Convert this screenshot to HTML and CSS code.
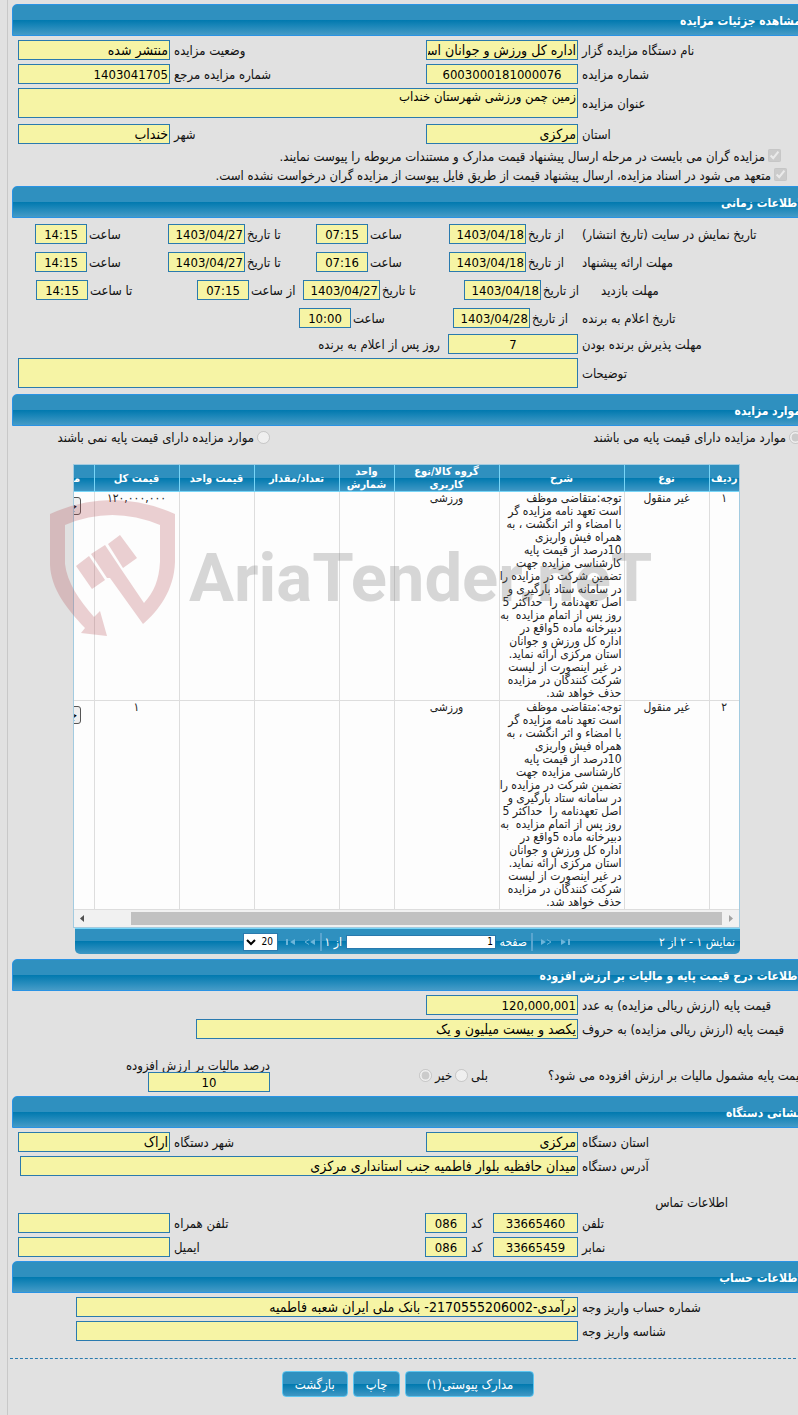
FILE: index.html
```html
<!DOCTYPE html>
<html lang="fa">
<head>
<meta charset="utf-8">
<title>مشاهده جزئیات مزایده</title>
<link rel="stylesheet" href="styles.css">
</head>
<body>
<main class="page" dir="rtl">
  <h2 class="bar">مشاهده جزئیات مزایده</h2>
  <section class="panel">
    <div class="row pair">
      <label for="org">نام دستگاه مزایده گزار</label><input id="org" value="اداره کل ورزش و جوانان استان مرکزی" readonly>
      <label for="state">وضعیت مزایده</label><input id="state" value="منتشر شده" readonly>
    </div>
    <div class="row pair">
      <label for="num">شماره مزایده</label><input id="num" class="mid" value="6003000181000076" readonly>
      <label for="ref">شماره مزایده مرجع</label><input id="ref" class="digits" value="1403041705" readonly>
    </div>
    <div class="row single">
      <label for="subject">عنوان مزایده</label><textarea id="subject" readonly>زمین چمن ورزشی شهرستان خنداب</textarea>
    </div>
    <div class="row pair spaced">
      <label for="prov">استان</label><input id="prov" value="مرکزی" readonly>
      <label for="city">شهر</label><input id="city" value="خنداب" readonly>
    </div>
    <div class="tick inset"><input type="checkbox" id="t1" checked disabled><label for="t1">مزایده گران می بایست در مرحله ارسال پیشنهاد قیمت مدارک و مستندات مربوطه را پیوست نمایند.</label></div>
    <div class="tick"><input type="checkbox" id="t2" checked disabled><label for="t2">متعهد می شود در اسناد مزایده، ارسال پیشنهاد قیمت از طریق فایل پیوست از مزایده گران درخواست نشده است.</label></div>
  </section>

  <h2 class="bar">اطلاعات زمانی</h2>
  <section class="panel times">
    <div class="row span">
      <span class="lead">تاریخ نمایش در سایت (تاریخ انتشار)</span>
      <div class="field"><label for="a1">از تاریخ</label><input id="a1" class="date" value="1403/04/18" readonly></div>
      <div class="field"><label for="a2">ساعت</label><input id="a2" class="time" value="07:15" readonly></div>
      <div class="field"><label for="a3">تا تاریخ</label><input id="a3" class="date" value="1403/04/27" readonly></div>
      <div class="field"><label for="a4">ساعت</label><input id="a4" class="time" value="14:15" readonly></div>
    </div>
    <div class="row span">
      <span class="lead">مهلت ارائه پیشنهاد</span>
      <div class="field"><label for="b1">از تاریخ</label><input id="b1" class="date" value="1403/04/18" readonly></div>
      <div class="field"><label for="b2">ساعت</label><input id="b2" class="time" value="07:16" readonly></div>
      <div class="field"><label for="b3">تا تاریخ</label><input id="b3" class="date" value="1403/04/27" readonly></div>
      <div class="field"><label for="b4">ساعت</label><input id="b4" class="time" value="14:15" readonly></div>
    </div>
    <div class="row span visit">
      <span class="lead">مهلت بازدید</span>
      <div class="field"><label for="c1">از تاریخ</label><input id="c1" class="date" value="1403/04/18" readonly></div>
      <div class="field"><label for="c2">تا تاریخ</label><input id="c2" class="date" value="1403/04/27" readonly></div>
      <div class="field"><label for="c3">از ساعت</label><input id="c3" class="time" value="07:15" readonly></div>
      <div class="field"><label for="c4">تا ساعت</label><input id="c4" class="time" value="14:15" readonly></div>
    </div>
    <div class="row span winner">
      <span class="lead">تاریخ اعلام به برنده</span>
      <div class="field"><label for="d1">از تاریخ</label><input id="d1" class="date" value="1403/04/28" readonly></div>
      <div class="field"><label for="d2">ساعت</label><input id="d2" class="time" value="10:00" readonly></div>
    </div>
    <div class="row accept">
      <label for="days">مهلت پذیرش برنده بودن</label><input id="days" class="mid" value="7" readonly>
      <span class="after">روز پس از اعلام به برنده</span>
    </div>
    <div class="row single">
      <label for="notes">توضیحات</label><textarea id="notes" readonly></textarea>
    </div>
  </section>

  <h2 class="bar">موارد مزایده</h2>
  <section class="panel items">
    <div class="choices">
      <div class="choice"><input type="radio" name="base" id="r1" checked disabled><label for="r1">موارد مزایده دارای قیمت پایه می باشند</label></div>
      <div class="choice"><input type="radio" name="base" id="r2" disabled><label for="r2">موارد مزایده دارای قیمت پایه نمی باشند</label></div>
    </div>
    <div class="gridbox">
      <div class="viewport">
        <table>
          <colgroup><col class="c1"><col class="c2"><col class="c3"><col class="c4"><col class="c5"><col class="c6"><col class="c7"><col class="c8"><col class="c9"></colgroup>
          <thead><tr><th>ردیف</th><th>نوع</th><th>شرح</th><th>گروه کالا/نوع<br>کاربری</th><th>واحد<br>شمارش</th><th>تعداد/مقدار</th><th>قیمت واحد</th><th>قیمت کل</th><th>مشاهده</th></tr></thead>
          <tbody>
            <tr><td>۱</td><td>غیر منقول</td><td class="desc">توجه:متقاضی موظف<br>است تعهد نامه مزایده گر<br>با امضاء و اثر انگشت ، به<br>همراه فیش واریزی<br>10درصد از قیمت پایه<br>کارشناسی مزایده جهت<br>تضمین شرکت در مزایده را<br>در سامانه ستاد بارگیری و<br>اصل تعهدنامه را &nbsp;حداکثر 5<br>روز پس از اتمام مزایده &nbsp;به<br>دبیرخانه ماده 5واقع در<br>اداره کل ورزش و جوانان<br>استان مرکزی ارائه نماید.<br>در غیر اینصورت از لیست<br>شرکت کنندگان در مزایده<br>حذف خواهد شد.</td><td>ورزشی</td><td></td><td></td><td></td><td>۱۲۰,۰۰۰,۰۰۰</td><td><button type="button" class="more">جزئیات</button></td></tr>
            <tr><td>۲</td><td>غیر منقول</td><td class="desc">توجه:متقاضی موظف<br>است تعهد نامه مزایده گر<br>با امضاء و اثر انگشت ، به<br>همراه فیش واریزی<br>10درصد از قیمت پایه<br>کارشناسی مزایده جهت<br>تضمین شرکت در مزایده را<br>در سامانه ستاد بارگیری و<br>اصل تعهدنامه را &nbsp;حداکثر 5<br>روز پس از اتمام مزایده &nbsp;به<br>دبیرخانه ماده 5واقع در<br>اداره کل ورزش و جوانان<br>استان مرکزی ارائه نماید.<br>در غیر اینصورت از لیست<br>شرکت کنندگان در مزایده<br>حذف خواهد شد.</td><td>ورزشی</td><td></td><td></td><td></td><td>۱</td><td><button type="button" class="more">جزئیات</button></td></tr>
          </tbody>
        </table>
        <div class="scroll" dir="ltr">
          <svg width="17" height="17" viewBox="0 0 17 17"><path d="M10 5v7L6 8.500z" fill="#505050"/></svg>
          <div class="thumb"></div>
          <svg width="17" height="17" viewBox="0 0 17 17"><path d="M7 5v7l4-3.500z" fill="#a3a3a3"/></svg>
        </div>
      </div>
      <div class="pager">
        <span class="info">نمایش ۱ - ۲ از ۲</span>
        <button type="button" class="nav" aria-label="اولین"><svg width="12" height="8" viewBox="0 0 12 8"><path d="M2 1v6l5-3z"/><path d="M9 1h2v6H9z"/></svg></button>
        <button type="button" class="nav" aria-label="قبلی"><svg width="12" height="8" viewBox="0 0 12 8"><path d="M1 1v6l5-3z"/><path d="M7 1.500L11 4 7 6.500" class="line"/></svg></button>
        <i class="sep"></i>
        <label for="pg">صفحه</label><input id="pg" value="1"><span class="of">از ۱</span>
        <i class="sep"></i>
        <button type="button" class="nav" aria-label="بعدی"><svg width="12" height="8" viewBox="0 0 12 8"><path d="M11 1v6L6 4z"/><path d="M5 1.500L1 4l4 2.500" class="line"/></svg></button>
        <button type="button" class="nav" aria-label="آخرین"><svg width="12" height="8" viewBox="0 0 12 8"><path d="M10 1v6L5 4z"/><path d="M1 1h2v6H1z"/></svg></button>
        <select aria-label="تعداد در صفحه"><option>20</option></select>
      </div>
      <div class="mark" dir="ltr" aria-hidden="true">
        <svg width="125" height="138" viewBox="0 0 125 138" fill="#b54a50"><path d="M0 15Q62-13 125 15V63C124 92 108 112 93 125L60 79H57L41 55 55 46 71 70 94 104C104 93 109 81 110 63V26Q62 6 15 26V65C17 83 29 101 44 118L50 112 57 137 31 134 35 129C17 110 1 90 0 66z"/><path d="M58 45L70 36 87 59 73 69zM26 67L39 57 55 81 42 90z"/></svg>
        <span>AriaTender.neT</span>
      </div>
    </div>
  </section>

  <h2 class="bar">اطلاعات درج قیمت پایه و مالیات بر ارزش افزوده</h2>
  <section class="panel">
    <div class="row pair"><label for="p1">قیمت پایه (ارزش ریالی مزایده) به عدد</label><input id="p1" class="digits" value="120,000,001" readonly></div>
    <div class="row words"><label for="p2">قیمت پایه (ارزش ریالی مزایده) به حروف</label><input id="p2" value="یکصد و بیست میلیون و یک" readonly></div>
    <div class="tax">
      <span class="ask">قیمت پایه مشمول مالیات بر ارزش افزوده می شود؟</span>
      <div class="yesno"><label for="y">بلی</label><input type="radio" name="tax" id="y" disabled><label for="n">خیر</label><input type="radio" name="tax" id="n" checked disabled></div>
      <div class="rate"><label for="rate">درصد مالیات بر ارزش افزوده</label><input id="rate" class="mid" value="10" readonly></div>
    </div>
  </section>

  <h2 class="bar">نشانی دستگاه</h2>
  <section class="panel">
    <div class="row pair">
      <label for="op">استان دستگاه</label><input id="op" value="مرکزی" readonly>
      <label for="oc">شهر دستگاه</label><input id="oc" value="اراک" readonly>
    </div>
    <div class="row address"><label for="oa">آدرس دستگاه</label><input id="oa" value="میدان حافظیه بلوار فاطمیه جنب استانداری مرکزی" readonly></div>
    <h3 class="sub">اطلاعات تماس</h3>
    <div class="row phone">
      <label for="ph">تلفن</label><input id="ph" class="mid" value="33665460" readonly>
      <label for="pc">کد</label><input id="pc" class="mid" value="086" readonly>
      <label for="mob">تلفن همراه</label><input id="mob" readonly>
    </div>
    <div class="row phone">
      <label for="fx">نمابر</label><input id="fx" class="mid" value="33665459" readonly>
      <label for="fc">کد</label><input id="fc" class="mid" value="086" readonly>
      <label for="em">ایمیل</label><input id="em" readonly>
    </div>
  </section>

  <h2 class="bar">اطلاعات حساب</h2>
  <section class="panel">
    <div class="row account"><label for="ac">شماره حساب واریز وجه</label><input id="ac" value="درآمدی-2170555206002- بانک ملی ایران شعبه فاطمیه" readonly></div>
    <div class="row account"><label for="ai">شناسه واریز وجه</label><input id="ai" readonly></div>
  </section>

  <footer class="actions">
    <button type="button" class="wide">مدارک پیوستی(۱)</button>
    <button type="button">چاپ</button>
    <button type="button">بازگشت</button>
  </footer>
</main>
</body>
</html>
```
FILE: styles.css
```css
* { box-sizing: border-box; }
html { background: #e1e1e1; overflow-x: hidden; }
body {
  margin: 0;
  overflow-x: hidden;
  background: #e1e1e1;
  color: #111;
  font: 13px/16px "DejaVu Sans Condensed", "DejaVu Sans", sans-serif;
}
input, textarea, button, select { font-family: inherit; margin: 0; }

/* the form is a little wider than the window and is cut on its right side */
.page {
  margin: 0 -8px 0 7px;
  border-left: 1px solid #c8c8c8;
  padding: 4px 0 18px 4px;
}
.bar {
  margin: 0;
  height: 32px;
  padding: 0 4px;
  border: 1px solid #2a93e4;
  border-radius: 5px 0 0 0;
  background: linear-gradient(#2f90bf 50%, #0079af 50%, #459bc7);
  color: #fff;
  font-size: 12px;
  line-height: 32px;
  font-weight: bold;
}
.panel {
  display: flex;
  flex-direction: column;
  gap: 4px;
  padding: 4px 0 4px 6px;
}

.row { display: grid; column-gap: 4px; align-items: center; }
.row > label, .lead, .field label { padding-top: 2px; text-align: end; white-space: nowrap; }
.pair { grid-template-columns: 1fr 152px 248px 152px; }
.single { grid-template-columns: 1fr 560px; }
.address { grid-template-columns: 1fr 558px; padding-left: 2px; }
.spaced { margin-top: 2px; }
.row input, .row textarea, .rate input {
  width: 100%;
  height: 20px;
  padding: 0 1px;
  border: 1px solid #2a7aae;
  border-radius: 0;
  background: #f6f4a5;
  color: #000;
  font-size: 14px;
  direction: rtl;
}
.row textarea {
  display: block;
  height: 30px;
  resize: none;
  overflow: hidden;
  font-size: 13px;
  line-height: 16px;
}
.row .mid, .rate .mid, .row .time { text-align: center; font-size: 13px; }
.row .digits, .row .date { font-size: 13px; }

.tick { display: flex; align-items: center; gap: 3px; height: 15px; padding-right: 19px; }
.tick.inset { padding-right: 25px; }
.tick input, .choice input, .yesno input { width: 13px; height: 13px; flex: none; }
.tick label { padding-top: 2px; white-space: nowrap; }

.times { gap: 8px; padding: 6px 0 6px 6px; }
.span { grid-template-columns: 1fr 133px 133px 148px 133px; column-gap: 0; padding-left: 17px; }
.span.visit { grid-template-columns: 1fr 137px 161px 106px 161px; padding-left: 18px; }
.span.winner { grid-template-columns: 1fr 129px 154px; padding-left: 281px; }
.field { display: flex; align-items: center; gap: 2px; }
.field label { flex: 1; }
.field .date { flex: none; width: 77px; direction: ltr; text-align: right; }
.field .time { flex: none; width: 52px; }
.accept { grid-template-columns: 1fr 130px 426px; margin-top: -2px; }
.accept .after { padding: 2px 4px 0 0; }
.accept + .row { margin-top: -4px; }

.items { gap: 20px; padding: 4px 0 5px 6px; }
.choices { display: grid; grid-template-columns: 1fr 252px; }
.choice { display: flex; align-items: center; gap: 3px; height: 14px; white-space: nowrap; }
.choice:first-child { padding-right: 4px; }
.choice label { padding-top: 2px; }

.gridbox { position: relative; margin: 0 66px 0 55px; }
.viewport { overflow: hidden; border: 1px solid #a3cbe0; background: #fdfdfd; }
table { width: 711px; table-layout: fixed; border-collapse: collapse; }
.c1 { width: 30px; }
.c2, .c6, .c8 { width: 85px; }
.c3 { width: 125px; }
.c4 { width: 105px; }
.c5 { width: 55px; }
.c7 { width: 75px; }
.c9 { width: 66px; }
th {
  height: 26px;
  padding: 0;
  border: solid #77d5f7;
  border-width: 0 0 1px 1px;
  background: linear-gradient(#2f90bf 50%, #0079af 50%, #3f97c4);
  color: #fff;
  font-size: 11px;
  line-height: 13px;
  white-space: nowrap;
}
td {
  height: 209px;
  padding: 0 2px;
  border: solid #ddd;
  border-width: 0 0 1px 1px;
  color: #222;
  text-align: center;
  vertical-align: top;
  line-height: 13px;
  font-size: 12px;
}
.desc { text-align: start; white-space: nowrap; overflow: hidden; }
.more { width: 40px; height: 18px; margin-top: 5px; padding: 0; border: 1px solid #555; border-radius: 3px; background: #eee; font-size: 12px; line-height: 14px; vertical-align: top; }
.scroll { display: flex; align-items: center; height: 17px; background: #f1f1f1; }
.scroll svg { flex: none; }
.thumb { flex: 1; height: 13px; margin-left: 40px; background: #c1c1c1; }

.pager {
  display: flex;
  align-items: center;
  height: 26px;
  margin-left: 2px;
  padding-right: 5px;
  border-top: 1px solid #77d5f7;
  border-radius: 0 0 5px 5px;
  background: linear-gradient(#2f90bf 50%, #0079af 50%, #3f97c4);
  color: #fff;
  font-size: 12px;
}
.info { flex: 0 0 164px; }
.nav { flex: none; width: 12px; height: 8px; margin-left: 7px; padding: 0; border: 0; background: none; display: flex; fill: #6cb5da; }
.nav .line { fill: none; stroke: #6cb5da; }
.sep { width: 2px; height: 18px; margin-left: 4px; background: #5aa5cf; }
.pager label { width: 31px; white-space: nowrap; }
.pager input { width: 150px; height: 14px; padding: 0 2px; border: 1px solid #2a7aae; font-size: 10px; }
.of { width: 24px; padding-right: 4px; white-space: nowrap; }
.pager select { width: 35px; height: 18px; border: 1px solid #2a7aae; border-radius: 0; background: #fff; color: #000; font-size: 10px; }

.mark {
  position: absolute;
  top: 35px;
  left: -23px;
  display: flex;
  opacity: 0.25;
  pointer-events: none;
}
.mark svg { flex: none; }
.mark span {
  margin-left: 14px;
  padding-top: 46px;
  color: #666;
  font: bold 67px/67px Roboto, "Liberation Sans", sans-serif;
}

.words { grid-template-columns: 1fr 382px; padding-left: 178px; }
.tax { display: grid; grid-template-columns: 1fr 278px 252px; align-items: center; margin-top: 16px; }
.ask { text-align: end; white-space: nowrap; }
.yesno { display: flex; align-items: center; gap: 3px; padding-right: 60px; }
.rate { display: flex; flex-direction: column; }
.rate label { line-height: 13px; }
.rate input { width: 122px; }

.sub { margin: 16px 78px 0 0; font-size: 13px; line-height: 13px; font-weight: normal; }
.phone { grid-template-columns: 1fr 85px 18px 42px 247px 152px; }
.account { grid-template-columns: 1fr 502px; padding-left: 58px; }

.actions {
  display: flex;
  justify-content: center;
  gap: 5px;
  margin: 13px 0 0 -2px;
  padding-top: 12px;
  border-top: 1px dashed #2a7aae;
}
.actions button {
  height: 26px;
  padding: 0 12px;
  border: 1px solid #5cc5f0;
  border-radius: 4px;
  background: linear-gradient(#2f90bf 50%, #0079af 50%, #3f97c4);
  color: #fff;
  font-size: 13px;
}
.actions .wide { padding: 0 20px; }
```
